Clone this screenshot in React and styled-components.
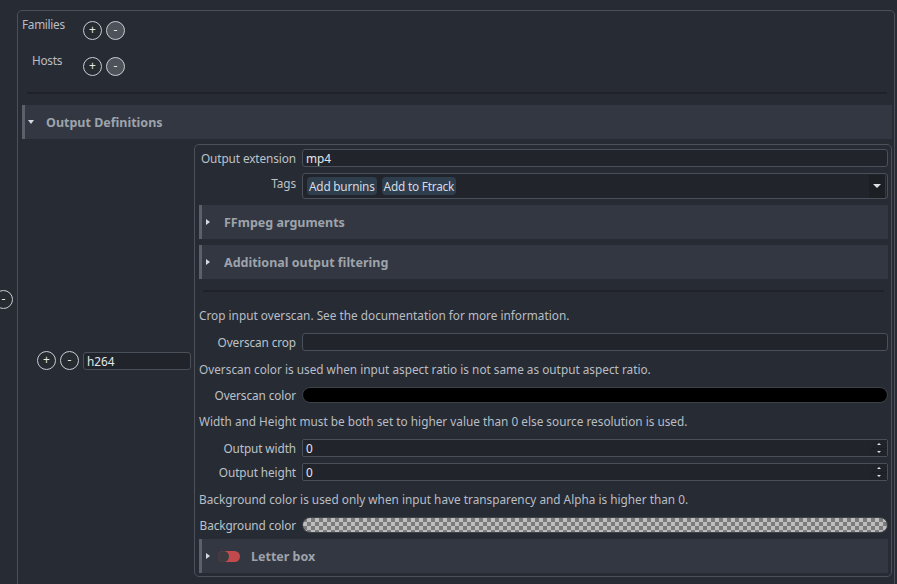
import styled, { createGlobalStyle } from "styled-components";

const GlobalStyle = createGlobalStyle`
  html, body {
    margin: 0;
    padding: 0;
    background: #272b33;
    overflow: hidden;
  }
  body {
    font-family: "Noto Sans", "Open Sans", sans-serif;
    font-size: 11.8px;
    color: #c3c8cf;
  }
`;

function RoundButton({ sign, filled }) {
  return <Circle $filled={filled}>{sign}</Circle>;
}

function Collapsible({ title, open, toggle }) {
  return (
    <SectionHeader>
      <Caret $open={open} />
      {toggle && <Toggle />}
      <SectionTitle $open={open} $toggle={toggle}>
        {title}
      </SectionTitle>
    </SectionHeader>
  );
}

function SpinBox({ value }) {
  return (
    <InputShell>
      <InputText>{value}</InputText>
      <SpinButtons>
        <SpinButton>
          <TinyArrow $up />
        </SpinButton>
        <SpinButton>
          <TinyArrow />
        </SpinButton>
      </SpinButtons>
    </InputShell>
  );
}

export default function App() {
  return (
    <>
      <GlobalStyle />
      <Page>
        <OuterRemove>
          <RoundButton sign="-" />
        </OuterRemove>
        <Frame>
          <ListRow>
            <ListLabel>Families</ListLabel>
            <ButtonPair>
              <RoundButton sign="+" />
              <RoundButton sign="-" filled />
            </ButtonPair>
          </ListRow>
          <ListRow>
            <ListLabel>Hosts</ListLabel>
            <ButtonPair>
              <RoundButton sign="+" />
              <RoundButton sign="-" filled />
            </ButtonPair>
          </ListRow>
          <TopDivider />
          <Collapsible title="Output Definitions" open />
          <ItemRow>
            <ItemControls>
              <RoundButton sign="+" />
              <RoundButton sign="-" />
              <KeyInput>h264</KeyInput>
            </ItemControls>
            <Box>
              <FormRow>
                <FieldLabel>Output extension</FieldLabel>
                <TextInput>mp4</TextInput>
              </FormRow>
              <FormRow $top>
                <FieldLabel $top>Tags</FieldLabel>
                <TagsBox>
                  <Chip>Add burnins</Chip>
                  <Chip>Add to Ftrack</Chip>
                  <DropButton>
                    <TinyArrow $big />
                  </DropButton>
                </TagsBox>
              </FormRow>
              <Collapsible title="FFmpeg arguments" />
              <Collapsible title="Additional output filtering" />
              <InnerDivider />
              <Note>Crop input overscan. See the documentation for more information.</Note>
              <FormRow>
                <FieldLabel>Overscan crop</FieldLabel>
                <TextInput />
              </FormRow>
              <Note>Overscan color is used when input aspect ratio is not same as output aspect ratio.</Note>
              <FormRow>
                <FieldLabel>Overscan color</FieldLabel>
                <ColorBar />
              </FormRow>
              <Note>Width and Height must be both set to higher value than 0 else source resolution is used.</Note>
              <FormRow>
                <FieldLabel>Output width</FieldLabel>
                <SpinBox value="0" />
              </FormRow>
              <FormRow>
                <FieldLabel>Output height</FieldLabel>
                <SpinBox value="0" />
              </FormRow>
              <Note>Background color is used only when input have transparency and Alpha is higher than 0.</Note>
              <FormRow>
                <FieldLabel>Background color</FieldLabel>
                <ColorBar $checker />
              </FormRow>
              <Collapsible title="Letter box" toggle />
            </Box>
          </ItemRow>
        </Frame>
      </Page>
    </>
  );
}

const Page = styled.div`
  display: flex;
  align-items: center;
  padding: 10px 2px 0 0;
`;

const OuterRemove = styled.div`
  margin-left: -6px;
  margin-right: 4px;
  flex: none;
`;

const Circle = styled.div`
  width: 19px;
  height: 19px;
  box-sizing: border-box;
  border-radius: 50%;
  border: 1px solid #c9cdd3;
  background: ${(p) => (p.$filled ? "#4d525b" : "#262a31")};
  color: #e6e9ed;
  font-size: 12px;
  line-height: 1;
  display: flex;
  align-items: center;
  justify-content: center;
  padding-bottom: 1px;
  flex: none;
`;

const Frame = styled.div`
  flex: 1;
  border: 1px solid #4b5059;
  border-radius: 5px;
  padding: 5px 2px 10px 4px;
  display: flex;
  flex-direction: column;
`;

const ListRow = styled.div`
  display: grid;
  grid-template-columns: 40px auto;
  column-gap: 21px;
  align-items: start;
  height: 24px;
  margin-bottom: 12px;
  &:nth-child(2) {
    margin-bottom: 0;
  }
`;

const ListLabel = styled.div`
  text-align: right;
  line-height: 17px;
  white-space: nowrap;
  color: #b9bec6;
  letter-spacing: -0.3px;
`;

const ButtonPair = styled.div`
  display: flex;
  gap: 4px;
  margin-top: 5px;
`;

const TopDivider = styled.div`
  height: 2px;
  background: #1f2228;
  margin: 16px 5px 11px;
`;

const SectionHeader = styled.div`
  height: 34px;
  box-sizing: border-box;
  background: #323742;
  border-left: 3px solid #5b616b;
  display: flex;
  align-items: center;
  flex: none;
`;

const Caret = styled.div`
  width: 0;
  height: 0;
  margin-left: ${(p) => (p.$open ? "3px" : "4px")};
  border-style: solid;
  border-color: transparent;
  ${(p) =>
    p.$open
      ? `border-width: 4px 3.5px 0 3.5px; border-top-color: #d6dae0;`
      : `border-width: 3.5px 0 3.5px 4px; border-left-color: #d6dae0;`}
`;

const SectionTitle = styled.div`
  margin-left: ${(p) => (p.$toggle ? "11px" : p.$open ? "12px" : "14px")};
  font-weight: bold;
  font-size: 12.5px;
  color: #9ea3ab;
`;

const Toggle = styled.div`
  width: 22px;
  height: 11px;
  margin-left: 8px;
  border-radius: 6px;
  background: #c24a4c;
  position: relative;
  &::before {
    content: "";
    position: absolute;
    left: 0;
    top: 0;
    width: 11px;
    height: 11px;
    border-radius: 50%;
    background: #3a3c41;
  }
`;

const ItemRow = styled.div`
  display: flex;
  align-items: center;
  margin-top: 5px;
  padding-left: 15px;
`;

const ItemControls = styled.div`
  display: flex;
  align-items: center;
  gap: 4px;
  margin-right: 3px;
`;

const KeyInput = styled.div`
  width: 108px;
  height: 18px;
  box-sizing: border-box;
  border: 1px solid #4a5059;
  border-radius: 3px;
  background: #21252b;
  color: #e4e7eb;
  padding: 0 3px;
  line-height: 16px;
`;

const Box = styled.div`
  flex: 1;
  border: 1px solid #4b5059;
  border-radius: 5px;
  padding: 4px 3px 3px 4px;
  display: flex;
  flex-direction: column;
  gap: 6px;
`;

const FormRow = styled.div`
  display: grid;
  grid-template-columns: 97px 1fr;
  column-gap: 6px;
  align-items: ${(p) => (p.$top ? "start" : "center")};
`;

const FieldLabel = styled.div`
  text-align: right;
  white-space: nowrap;
  line-height: 16px;
  margin-top: ${(p) => (p.$top ? "2px" : "0")};
  color: #bdc2c9;
  letter-spacing: -0.1px;
`;

const inputBase = `
  height: 18px;
  box-sizing: border-box;
  border: 1px solid #4a5059;
  border-radius: 3px;
  background: #21252b;
`;

const TextInput = styled.div`
  ${inputBase}
  color: #e4e7eb;
  padding: 0 3px;
  line-height: 16px;
`;

const InputShell = styled.div`
  ${inputBase}
  display: flex;
  align-items: stretch;
  border-radius: 2px;
`;

const InputText = styled.div`
  flex: 1;
  padding: 0 3px;
  line-height: 16px;
  color: #e4e7eb;
`;

const SpinButtons = styled.div`
  width: 16px;
  display: flex;
  flex-direction: column;
  gap: 1px;
  background: #1b1e23;
`;

const SpinButton = styled.div`
  flex: 1;
  background: #20242a;
  display: flex;
  align-items: center;
  justify-content: center;
`;

const TinyArrow = styled.div`
  width: 0;
  height: 0;
  border-style: solid;
  border-color: transparent;
  ${(p) =>
    p.$big
      ? `border-width: 4px 4px 0 4px; border-top-color: #dfe3e8;`
      : p.$up
      ? `border-width: 0 2px 2px 2px; border-bottom-color: #dfe3e8;`
      : `border-width: 2px 2px 0 2px; border-top-color: #dfe3e8;`}
`;

const TagsBox = styled.div`
  height: 26px;
  box-sizing: border-box;
  border: 1px solid #4a5059;
  border-radius: 3px;
  background: #21252b;
  display: flex;
  align-items: center;
  gap: 5px;
  padding: 0 1px 0 4px;
`;

const Chip = styled.div`
  height: 18px;
  line-height: 18px;
  padding: 0 2px;
  border-radius: 4px;
  background: #2f3e4d;
  color: #d6dae0;
  white-space: nowrap;
  letter-spacing: -0.2px;
`;

const DropButton = styled.div`
  margin-left: auto;
  width: 16px;
  height: 23px;
  background: #1c1f24;
  border-right: 1px solid #363b43;
  display: flex;
  align-items: center;
  justify-content: center;
`;

const InnerDivider = styled.div`
  height: 2px;
  background: #1f2228;
  margin: 5px 4px;
`;

const Note = styled.div`
  height: 24px;
  line-height: 24px;
  white-space: nowrap;
  color: #b9bec6;
`;

const ColorBar = styled.div`
  height: 16px;
  box-sizing: border-box;
  border-radius: 8px;
  border: 1px solid #3d424a;
  background: ${(p) =>
    p.$checker
      ? "repeating-conic-gradient(#bdbdbd 0% 25%, #7b7b7b 0% 50%) 0 0 / 8px 8px"
      : "#000000"};
`;
